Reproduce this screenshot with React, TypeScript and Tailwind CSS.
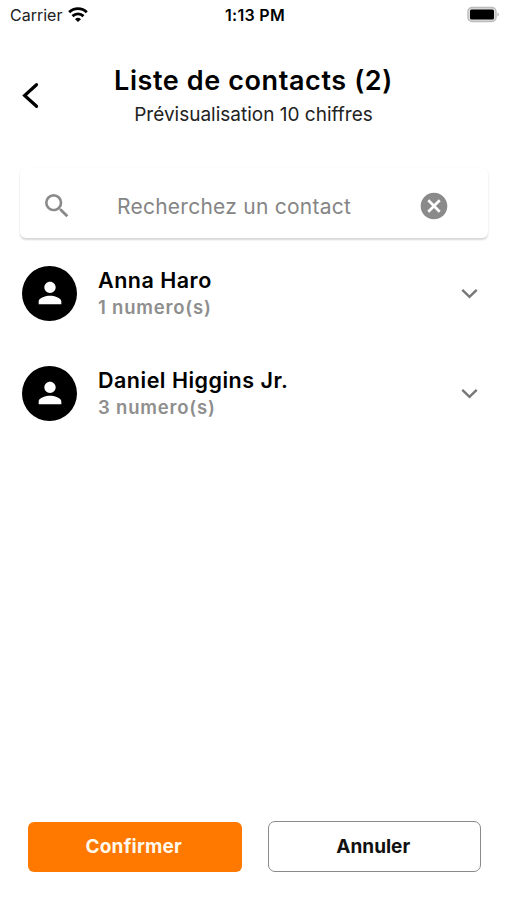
import { MdCancel, MdPerson, MdSearch } from 'react-icons/md';

interface Contact {
  name: string;
  count: number;
}

const contacts: Contact[] = [
  { name: 'Anna Haro', count: 1 },
  { name: 'Daniel Higgins Jr.', count: 3 },
];

function StatusBar() {
  return (
    <div className="grid h-[30px] grid-cols-3 items-center pl-[10px] pr-[7px] text-[16px]">
      <div className="flex items-center gap-[6px]">
        <span className="text-[#222]">Carrier</span>
        <svg className="mb-px" width="20" height="15" viewBox="0 0 20 15" fill="none" stroke="black" strokeWidth="2.9">
          <path d="M1.2 5.2a12.7 12.7 0 0 1 17.6 0" />
          <path d="M4.5 9.1a8 8 0 0 1 11 0" />
          <path d="M7 12.2a4.4 4.4 0 0 1 6 0L10 15z" fill="black" stroke="none" />
        </svg>
      </div>
      <span className="text-center font-semibold tracking-[0.3px]">1:13 PM</span>
      <svg className="mb-[2px] justify-self-end" width="33" height="17" viewBox="0 0 33 17">
        <rect x="1" y="1.5" width="28" height="14" rx="4" fill="#ddd" stroke="#bbb" strokeWidth="1.4" />
        <rect x="3" y="3.5" width="24" height="10" rx="1.5" />
        <path d="M30.5 6.5a2.2 2.2 0 0 1 0 4z" fill="#aaa" />
      </svg>
    </div>
  );
}

function ContactRow({ contact }: { contact: Contact }) {
  return (
    <li className="flex h-[100px] items-center pl-[22px] pr-[29px]">
      <div className="flex size-[55px] items-center justify-center rounded-full bg-black">
        <MdPerson className="size-[34px] text-white" />
      </div>
      <div className="ml-[21px] flex-1 pt-[2px]">
        <p className="text-[21.5px] font-semibold leading-[27px] tracking-[0.5px]">{contact.name}</p>
        <p className="text-[18.5px] font-semibold leading-[27px] tracking-[0.8px] text-[#8e8e8e]">
          {contact.count} numero(s)
        </p>
      </div>
      <svg width="17" height="11" viewBox="0 0 17 11" fill="none" stroke="#777" strokeWidth="2.4">
        <path d="M1.3 1.8l7.2 7 7.2-7" />
      </svg>
    </li>
  );
}

export default function App() {
  return (
    <div className="flex h-[900px] w-[507px] flex-col bg-white font-['Inter',sans-serif] text-black">
      <StatusBar />

      <header className="relative h-[138px] pt-[34px] text-center">
        <button aria-label="Retour" className="absolute left-[21px] top-[52px]">
          <svg
            width="18"
            height="27"
            viewBox="0 0 18 27"
            fill="none"
            stroke="black"
            strokeWidth="3.2"
            strokeLinecap="round"
          >
            <path d="M15.5 2.7L3.6 13.5l11.9 10.8" />
          </svg>
        </button>
        <h1 className="text-[27px] font-semibold leading-[34px] tracking-[0.6px]">Liste de contacts (2)</h1>
        <p className="pt-[1px] text-[19px] leading-[32px] text-[#222]">Prévisualisation 10 chiffres</p>
      </header>

      <div className="ml-[20px] mr-[19px] flex h-[70px] items-center rounded-[6px] pl-[21px] pr-[38px] pt-[6px] shadow-[0_1.5px_2px_rgba(0,0,0,0.16)]">
        <MdSearch className="size-[32px] text-[#8a8a8a]" />
        <input
          type="text"
          placeholder="Recherchez un contact"
          className="ml-[44px] w-0 flex-1 pt-px text-[21px] tracking-[0.25px] outline-none placeholder:text-[#858585]"
        />
        <MdCancel className="size-[32px] text-[#8a8a8a]" />
      </div>

      <ul className="mt-[5px] flex-1">
        {contacts.map(contact => (
          <ContactRow key={contact.name} contact={contact} />
        ))}
      </ul>

      <footer className="mb-[28px] grid grid-cols-2 gap-[26px] pl-[28px] pr-[26px]">
        <button className="h-[50px] rounded-[6px] bg-[#ff7900] pr-[2px] text-[19px] font-bold tracking-[0.2px] text-[#fff8ec]">
          Confirmer
        </button>
        <button className="-mt-px h-[51px] rounded-[7px] border border-[#8a8a8a] pr-[2px] pt-px text-[19px] font-bold text-[#111]">
          Annuler
        </button>
      </footer>
    </div>
  );
}
